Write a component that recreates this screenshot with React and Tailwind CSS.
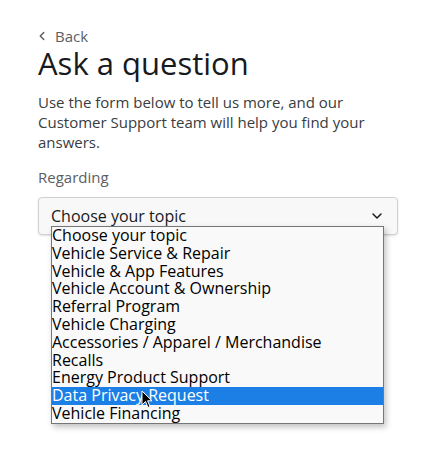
import { ChevronLeft, ChevronDown } from 'lucide-react';

const topics = [
  'Choose your topic',
  'Vehicle Service & Repair',
  'Vehicle & App Features',
  'Vehicle Account & Ownership',
  'Referral Program',
  'Vehicle Charging',
  'Accessories / Apparel / Merchandise',
  'Recalls',
  'Energy Product Support',
  'Data Privacy Request',
  'Vehicle Financing',
];

const selected = 'Data Privacy Request';

export default function App() {
  return (
    <div
      className="min-h-[450px] w-full bg-white px-[38px] pt-[26px] text-[#393c41]"
      style={{ fontFamily: '"Open Sans", Arial, sans-serif' }}
    >
      {/* Back link */}
      <a href="#" className="flex items-center gap-[6px] text-[15px] leading-[20px] text-[#5c5e62]">
        <ChevronLeft className="-ml-[3px] h-[14px] w-[14px]" strokeWidth={2.5} />
        Back
      </a>

      <h1 className="text-[31px] font-medium leading-[34px] text-[#171a20]">Ask a question</h1>

      <p className="mt-[12px] text-[15px] leading-[20px] text-[#393c41]">
        Use the form below to tell us more, and our Customer Support team will help you find your answers.
      </p>

      <label className="mt-[15px] block text-[15px] leading-[20px] text-[#5c5e62]">Regarding</label>

      {/* Select with its open list */}
      <div className="relative mt-[10px]">
        <div className="flex h-[38px] items-center justify-between rounded-[4px] border border-[#d0d1d2] bg-[#f8f8f8] pl-[12px] pr-[12px] shadow-[0_1px_2px_rgba(0,0,0,0.12)]">
          <span className="text-[16px] font-medium leading-[20px] text-[#171a20]">Choose your topic</span>
          <ChevronDown className="h-[16px] w-[16px] text-[#171a20]" strokeWidth={2.2} />
        </div>

        <ul className="absolute left-[13px] top-[29px] w-[333px] border border-[#767676] bg-[#f9f9f9] shadow-[2px_3px_6px_rgba(0,0,0,0.25)]">
          {topics.map((t) => (
            <li
              key={t}
              className={
                t === selected
                  ? 'relative h-[17.8px] bg-[#1c7fe6] text-[16px] leading-[17.8px] text-white'
                  : 'h-[17.8px] text-[16px] leading-[17.8px] text-black'
              }
            >
              {t}
              {t === selected && (
                <svg className="absolute left-[89px] top-[3px]" width="12" height="19" viewBox="0 0 12 19">
                  <path d="M1 1 L1 15 L4.5 11.5 L7 17.5 L9 16.6 L6.6 10.8 L11 10.8 Z" fill="#000" stroke="#fff" strokeWidth="1" strokeLinejoin="round" />
                </svg>
              )}
            </li>
          ))}
        </ul>
      </div>
    </div>
  );
}
